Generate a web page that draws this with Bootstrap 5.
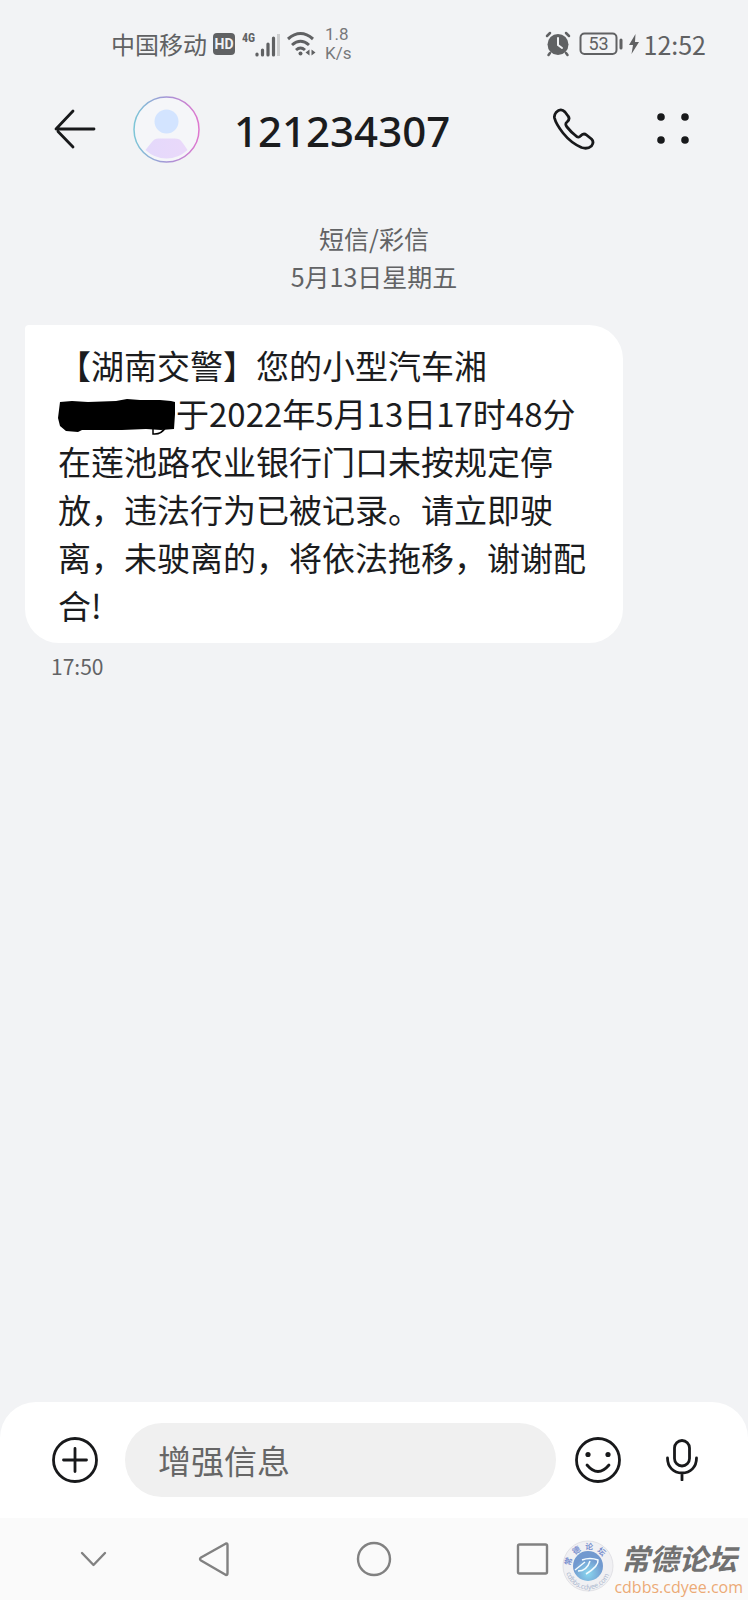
<!DOCTYPE html>
<html lang="zh-CN">
<head>
<meta charset="utf-8">
<meta name="viewport" content="width=device-width, initial-scale=1">
<title>121234307</title>
<link href="https://cdn.jsdelivr.net/npm/bootstrap@5.3.0/dist/css/bootstrap.min.css" rel="stylesheet">
<style>
  body { background: #f2f3f5; color: #1b1c1e; font-family: "Noto Sans CJK SC", sans-serif; text-spacing-trim: space-all; }
  svg { display: block; flex: none; }
  .status { height: 87px; padding: 0 42px 0 111px; color: #606163; font-size: 24px; line-height: 36px; }
  .rate { font: 17px/19px Roboto, sans-serif; color: #77787a; }
  .clock { font-size: 25px; }
  .topbar { height: 84px; padding: 0 52px 0 54px; }
  .number { font: 500 42px/56px "Noto Sans", sans-serif; margin-left: 34px; padding-top: 4px; }
  .icon-btn { background: none; border: 0; padding: 0; color: #18191b; }
  .meta { margin-top: 48px; font-size: 25px; line-height: 38px; color: #626365; }
  .bubble { width: 80%; margin: 30px 0 0 25px; padding: 16px 32px 14px 33px; background: #fff; border-radius: 4px 34px 34px 34px; font-size: 33px; line-height: 48px; }
  .redacted { display: inline-block; vertical-align: -10px; }
  .sent-at { margin: 8px 0 0 51px; font-size: 21px; line-height: 30px; color: #626365; }
  .compose { background: #fff; border-radius: 36px 36px 0 0; padding: 21px 50px; height: 116px; }
  .message { height: 74px; margin: 0 17px 0 25px; padding: 0 33px; background: #f0f0f0; border: 0; border-radius: 37px; font-size: 33px; min-width: 0; }
  .message::placeholder { color: #666; opacity: 1; }
  .sysnav { background: #fafafa; height: 82px; padding: 0 76px; color: #818181; }
  .watermark { right: 5px; bottom: 4px; text-decoration: none; }
  .forum { font-size: 29px; line-height: 42px; font-weight: 700; font-style: italic; color: #717171; }
  .site { font: 16px/18px "Open Sans", sans-serif; color: #ecaa76; }
</style>
</head>
<body>
<div class="d-flex flex-column min-vh-100">
  <div class="status d-flex align-items-center justify-content-between">
    <div class="d-flex align-items-center">
      <span>中国移动</span>
      <svg style="margin-left:5px" width="24" height="24" viewBox="0 0 24 24"><rect x="1" y="1" width="22" height="22" rx="4" fill="#606163"/><text x="12" y="17" text-anchor="middle" font-family="Roboto" font-weight="700" font-size="14" fill="#f2f3f5">HD</text></svg>
      <svg style="margin-left:6px" width="40" height="28" viewBox="0 0 40 28"><text x="0" y="12" font-family="Roboto Condensed, Liberation Sans Narrow, Roboto" font-weight="700" font-size="12" fill="#606163">4G</text><path d="M15 25v-1M20.500 25v-5M26 25V14M31.500 25V8" stroke="#606163" stroke-width="3.200" stroke-linecap="round"/><path d="M36.500 26V4" stroke="#cdcecf" stroke-width="3"/></svg>
      <svg style="margin-left:5px" width="30" height="26" viewBox="0 0 30 26" fill="none" stroke="#606163" stroke-width="3"><path d="M1 8q12.500-11 25 0M5 14q8.500-7.500 17 0M9 19q4.500-4 9 0"/><circle cx="13.500" cy="22.500" r="2" fill="#606163" stroke="none"/><path d="M22.500 18.500v6l-4-3zM24.500 18.500v6l4-3z" fill="#606163" stroke="none"/></svg>
      <div class="rate ms-2">1.8<br>K/s</div>
    </div>
    <div class="d-flex align-items-center">
      <svg width="26" height="26" viewBox="0 0 26 26" fill="none" stroke="#606163" stroke-width="2.500" stroke-linecap="round"><circle cx="13" cy="13.500" r="10.500" fill="#606163" stroke="none"/><path d="M2 5l3-3M24 5l-3-3M5 22l-1.500 2M21 22l1.500 2"/><path d="M13 7v7l4 3" stroke="#f2f3f5" stroke-width="2"/></svg>
      <svg class="ms-2" width="45" height="24" viewBox="0 0 45 24"><rect x="1.500" y="1.500" width="36" height="20.500" rx="4" fill="none" stroke="#606163" stroke-width="2"/><path d="M42 8v8" stroke="#606163" stroke-width="3" stroke-linecap="round"/><text x="19.500" y="18" text-anchor="middle" font-family="Roboto" font-size="18" fill="#606163">53</text></svg>
      <svg class="ms-1" width="12" height="22" viewBox="0 0 12 22"><path d="M7.500 1L1 12h4l-1.500 9L11 9H7z" fill="#606163"/></svg>
      <span class="clock ms-1">12:52</span>
    </div>
  </div>

  <header class="topbar d-flex align-items-center">
    <button class="icon-btn" type="button" aria-label="返回"><svg width="42" height="40" viewBox="0 0 42 40" fill="none" stroke="currentColor" stroke-width="2.800" stroke-linecap="round" stroke-linejoin="round"><path d="M19 2L2 20h38M4 22.500L19 38"/></svg></button>
    <svg style="margin-left:37px" width="67" height="67" viewBox="0 0 67 67"><defs><linearGradient id="ring"><stop stop-color="#7dc6d7"/><stop offset=".5" stop-color="#a596d6"/><stop offset="1" stop-color="#df77cf"/></linearGradient><linearGradient id="torso"><stop stop-color="#e4d9fb"/><stop offset="1" stop-color="#ead9fa"/></linearGradient></defs><circle cx="33.500" cy="33.500" r="32.500" fill="#f5f6f9" stroke="url(#ring)" stroke-width="1.500"/><circle cx="33.500" cy="25.500" r="12" fill="#d3e4ff"/><path d="M12.500 54q6-8 9-10.500 2-1 4-1h16q3 0 5 1 3 2.500 8 10.500-9 8.500-21 8.500T12.500 54z" fill="url(#torso)"/></svg>
    <h1 class="number mb-0 flex-grow-1">121234307</h1>
    <button class="icon-btn" type="button" aria-label="拨打电话"><svg width="42" height="42" viewBox="0 0 42 42" fill="none" stroke="currentColor" stroke-width="2.800" stroke-linejoin="round"><path d="M3 4.500Q8-.500 12 4L15 8q2.500 3-1 6-2.500 2 0 5 4 5 8.500 8.500 3 3 5 .5 3-3.500 6-1l5 4q3 3 0 7-4 3.500-10 1.500Q18 35 10 25 3 16 1.500 10q-.5-3 1.500-5.500z"/></svg></button>
    <button class="icon-btn" style="margin-left:59px" type="button" aria-label="更多"><svg width="42" height="36" viewBox="0 0 42 36" fill="currentColor"><circle cx="7" cy="6" r="3.800"/><circle cx="31" cy="6" r="3.800"/><circle cx="7" cy="29" r="3.800"/><circle cx="31" cy="29" r="3.800"/></svg></button>
  </header>

  <main class="flex-grow-1">
    <div class="meta text-center">短信/彩信<br>5月13日星期五</div>
    <div class="bubble">【湖南交警】您的小型汽车湘<svg class="redacted" width="118" height="38" viewBox="0 0 118 38" role="img" aria-label="已遮盖"><path d="M2 3L14 2 30 3 58 2 69 0 82 1 102 1 113 2 117 3 117 15 116 30 103 31 88 30 64 31 24 31 20 33 8 32 2 27 0 19z"/><path d="M95 28v7q8 1 13-7" fill="none" stroke="#000" stroke-width="1.500"/></svg>于2022年5月13日17时48分在莲池路农业银行门口未按规定停放，违法行为已被记录。请立即驶离，未驶离的，将依法拖移，谢谢配合!</div>
    <div class="sent-at">17:50</div>
  </main>

  <footer>
    <form class="compose d-flex align-items-center">
      <button class="icon-btn" type="button" aria-label="添加"><svg width="50" height="50" viewBox="0 0 50 50" fill="none" stroke="currentColor" stroke-width="2.800" stroke-linecap="round"><circle cx="25" cy="25" r="21.500"/><path d="M25 13.500v23M13.500 25h23"/></svg></button>
      <input class="message flex-grow-1" type="text" placeholder="增强信息" aria-label="增强信息">
      <button class="icon-btn" type="button" aria-label="表情"><svg width="50" height="50" viewBox="0 0 50 50" fill="none" stroke="currentColor" stroke-width="2.800" stroke-linecap="round"><circle cx="25" cy="25" r="21.500"/><path d="M14 30q11 13 22 0"/><circle cx="15" cy="19.500" r="2.600" fill="currentColor" stroke="none"/><circle cx="35" cy="19.500" r="2.600" fill="currentColor" stroke="none"/></svg></button>
      <button class="icon-btn" style="margin-left:43px" type="button" aria-label="语音"><svg width="32" height="42" viewBox="0 0 32 42" fill="none" stroke="currentColor" stroke-width="2.800" stroke-linecap="round"><rect x="8.500" y="1.500" width="15" height="25.500" rx="7.500"/><path d="M1.500 19c0 9 6 15 14.500 15s14.500-6 14.500-15M16 34v7"/></svg></button>
    </form>
    <nav class="sysnav position-relative d-flex align-items-center" aria-label="系统导航">
      <button class="icon-btn text-reset" type="button" aria-label="收起"><svg width="34" height="36" viewBox="0 0 34 36" fill="none" stroke="currentColor" stroke-width="2.400" stroke-linecap="round" stroke-linejoin="round"><path d="M6 12l11.500 12L29 12"/></svg></button>
      <button class="icon-btn text-reset" style="margin-left:88px" type="button" aria-label="后退"><svg width="34" height="36" viewBox="0 0 34 36" fill="none" stroke="currentColor" stroke-width="2.400" stroke-linejoin="round"><path d="M28 2.500L3 16.500q-2 1.500 0 3L28 34q1.500 0 1.500-2V4q0-2-1.500-1.500z"/></svg></button>
      <button class="icon-btn text-reset" style="margin-left:124px" type="button" aria-label="主页"><svg width="36" height="36" viewBox="0 0 36 36" fill="none" stroke="currentColor" stroke-width="2.400"><circle cx="18" cy="18" r="16"/></svg></button>
      <button class="icon-btn text-reset" style="margin-left:123px" type="button" aria-label="最近任务"><svg width="36" height="36" viewBox="0 0 36 36" fill="none" stroke="currentColor" stroke-width="2.400"><rect x="3" y="3.500" width="29" height="29" rx="1.500"/></svg></button>
      <a class="watermark position-absolute d-flex align-items-center" href="#">
        <svg width="52" height="52" viewBox="0 0 52 52"><defs><radialGradient id="orb" cx=".5" cy=".75"><stop stop-color="#8ad7ef"/><stop offset="1" stop-color="#7199cf"/></radialGradient><path id="arc-top" d="M8.500 27a17.500 17.500 0 0 1 35 0"/><path id="arc-low" d="M3.500 27a22.500 22.500 0 0 0 45 0"/></defs><circle cx="26" cy="26" r="25" fill="#f0f0f3" stroke="#e2e2e6"/><circle cx="26" cy="26" r="15" fill="url(#orb)"/><path d="M13 30l10-8M16 31q9 0 12-10M20 20q8-3 16 0 1 6-12 14" fill="none" stroke="#f2fbff" stroke-width="1.500"/><text font-size="8" font-weight="700" fill="#7b91cf"><textPath href="#arc-top" startOffset="1">常&#160; 德&#160; 论&#160; 坛</textPath></text><text font-family="Open Sans" font-size="7" fill="#a9b6cd"><textPath href="#arc-low" startOffset="6">cdbbs.cdyee.com</textPath></text></svg>
        <span class="d-flex flex-column align-items-center"><span class="forum">常德论坛</span><span class="site">cdbbs.cdyee.com</span></span>
      </a>
    </nav>
  </footer>
</div>
<script src="https://cdn.jsdelivr.net/npm/bootstrap@5.3.0/dist/js/bootstrap.bundle.min.js"></script>
</body>
</html>
